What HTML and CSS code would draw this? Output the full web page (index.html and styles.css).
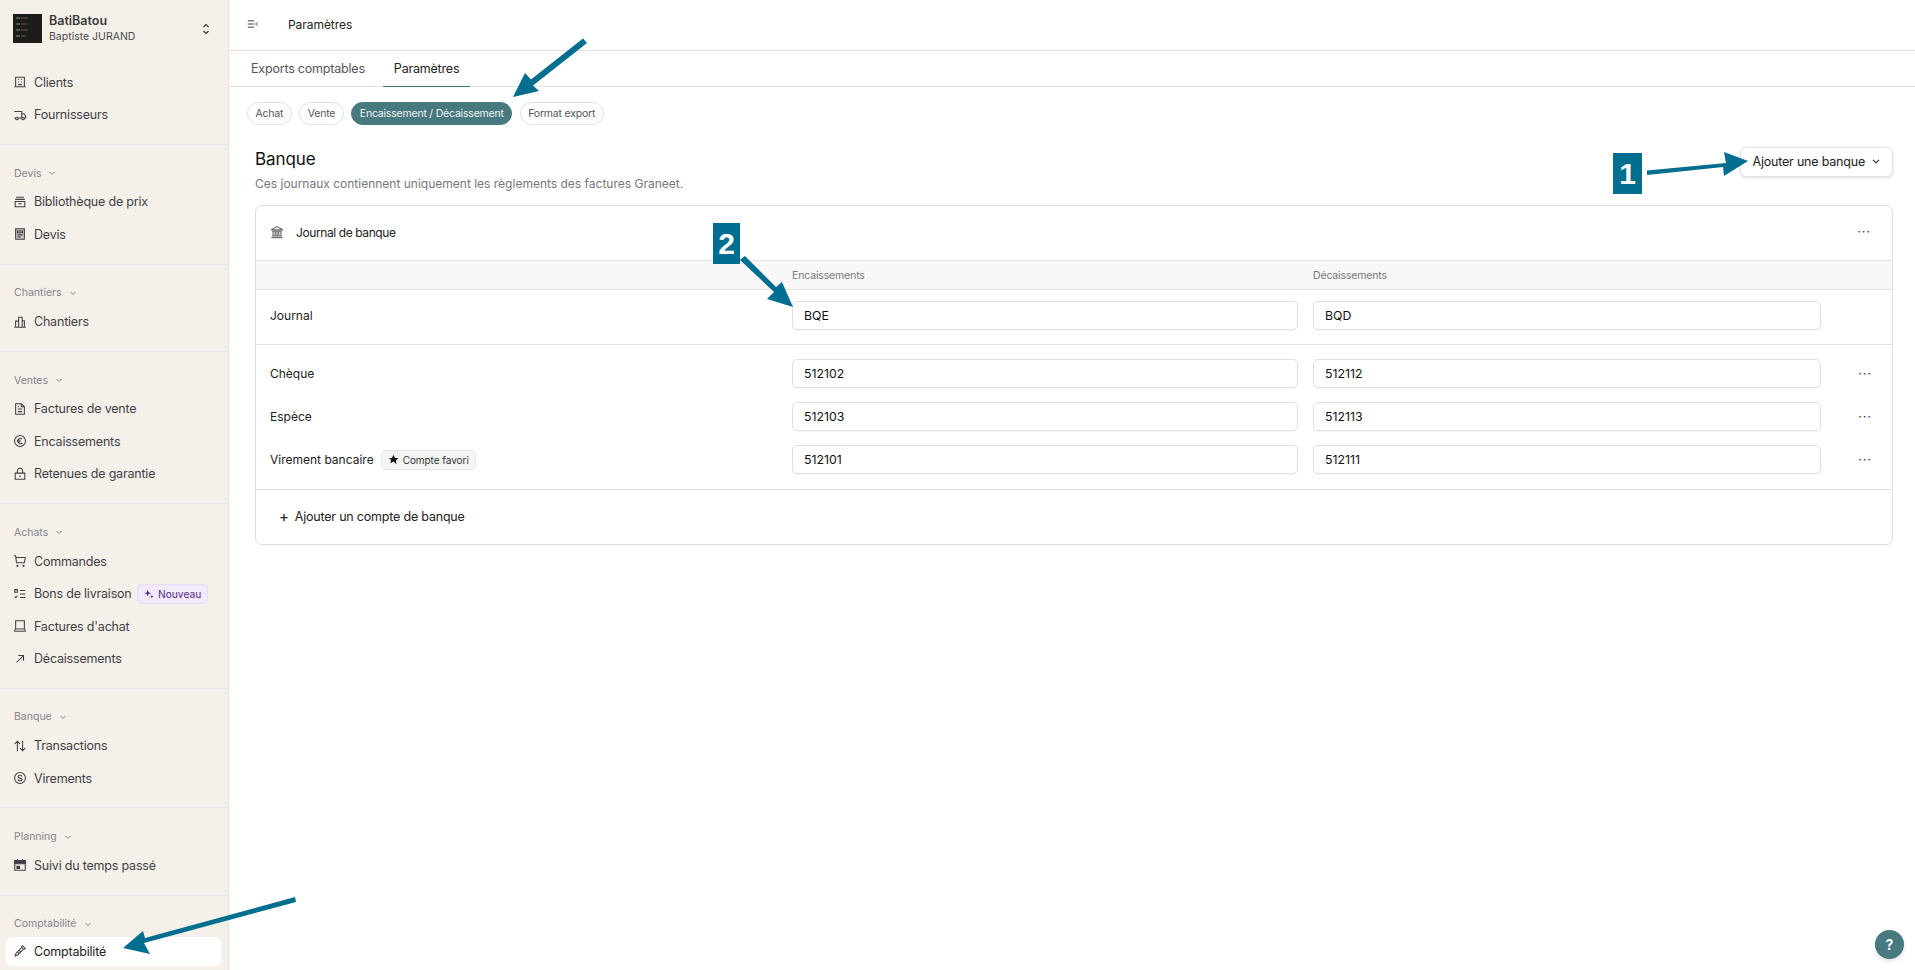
FILE: index.html
```html
<!DOCTYPE html>
<html lang="fr">
<head>
<meta charset="utf-8">
<title>Paramètres</title>
<link rel="stylesheet" href="styles.css">
</head>
<body>
<div class="app">
  <aside class="sidebar">
    <div class="account">
      <svg class="logo" viewBox="0 0 29 29"><rect width="29" height="29" fill="#1c1c1b"/><g fill="#4a5560"><rect x="3" y="3" width="4" height="2"/><rect x="3" y="9" width="4" height="2"/><rect x="3" y="15" width="4" height="2"/><rect x="3" y="21" width="4" height="2"/></g><g fill="#6b5a3a"><rect x="8" y="3.5" width="7" height="1"/><rect x="8" y="9.5" width="6" height="1"/><rect x="8" y="15.5" width="7" height="1"/><rect x="8" y="21.5" width="5" height="1"/></g></svg>
      <div class="account-text"><div class="account-name">BatiBatou</div><div class="account-user">Baptiste JURAND</div></div>
      <svg class="updown" viewBox="0 0 12 16" fill="none" stroke="#333" stroke-width="1.2"><path d="M3.500 6L6 3.500 8.500 6M3.500 10L6 12.500 8.500 10"/></svg>
    </div>
    <div class="section section-first">
      <a class="item"><svg class="ico" viewBox="0 0 16 16"><path d="M3 2.500h10v11H3zM1.500 13.500h13M6 5h1M9 5h1M6 8h1M9 8h1M6 11h4"/></svg>Clients</a>
      <a class="item"><svg class="ico" viewBox="0 0 16 16"><path d="M1.500 4h8.500v7.500H6M3 11.500H1.500zM10 6.500h2.500l2 2.500v2.500H13"/><circle cx="4.500" cy="12" r="1.500"/><circle cx="11.500" cy="12" r="1.500"/></svg>Fournisseurs</a>
    </div>
    <div class="section">
      <div class="label">Devis<svg class="chev" viewBox="0 0 10 10"><path d="M2.500 4L5 6.500 7.500 4"/></svg></div>
      <a class="item"><svg class="ico" viewBox="0 0 16 16"><path d="M3.500 2.500h9M2.500 5h11M2.500 7.500h11v6h-11zM6 10h4"/></svg>Bibliothèque de prix</a>
      <a class="item"><svg class="ico" viewBox="0 0 16 16"><path d="M3 2h10v12H3z" fill="#c9c7c4"/><path d="M5 4.500h6v2H5zM5 9h6M5 11.500h4"/></svg>Devis</a>
    </div>
    <div class="section">
      <div class="label">Chantiers<svg class="chev" viewBox="0 0 10 10"><path d="M2.500 4L5 6.500 7.500 4"/></svg></div>
      <a class="item"><svg class="ico" viewBox="0 0 16 16"><path d="M1.500 14h13M3 14V7h3.500M6.500 14V2.500h4V14M10.500 6.500H13V14"/></svg>Chantiers</a>
    </div>
    <div class="section">
      <div class="label">Ventes<svg class="chev" viewBox="0 0 10 10"><path d="M2.500 4L5 6.500 7.500 4"/></svg></div>
      <a class="item"><svg class="ico" viewBox="0 0 16 16"><path d="M3 2h6.500L13 5.500V14H3zM9.500 2v3.500H13M5.500 8h5M5.500 11h5M5.500 5.500H7"/></svg>Factures de vente</a>
      <a class="item"><svg class="ico" viewBox="0 0 16 16"><circle cx="8" cy="8" r="6.200"/><path d="M10.500 5.700a3 3 0 1 0 0 4.600M4.500 7.200h4M4.500 8.900h4"/></svg>Encaissements</a>
      <a class="item"><svg class="ico" viewBox="0 0 16 16"><path d="M2.500 7h11v7h-11zM5 7V4.500a3 3 0 0 1 6 0V7M7 10.500h2"/></svg>Retenues de garantie</a>
    </div>
    <div class="section">
      <div class="label">Achats<svg class="chev" viewBox="0 0 10 10"><path d="M2.500 4L5 6.500 7.500 4"/></svg></div>
      <a class="item"><svg class="ico" viewBox="0 0 16 16"><path d="M1 2h2l1 8h9l1-6H3.500"/><circle cx="5" cy="13.500" r=".7"/><circle cx="12" cy="13.500" r=".7"/></svg>Commandes</a>
      <a class="item"><svg class="ico" viewBox="0 0 16 16"><path d="M2 3h3v3H2zM8 4h6M8 8h6M8 12h6M2 11l1.200 1.200L5 10"/></svg>Bons de livraison<span class="badge"><svg class="spark" viewBox="0 0 12 12"><path d="M4.500 1l1 3 3 1-3 1-1 3-1-3-3-1 3-1zM9.500 7l.6 1.400 1.400.6-1.400.6-.6 1.400-.6-1.400L7.500 9l1.400-.6z"/></svg>Nouveau</span></a>
      <a class="item"><svg class="ico" viewBox="0 0 16 16"><path d="M3 2h10v9.500H3zM1.500 14h13M1.500 14c0-1.500 1.500-2.500 1.500-2.500M14.500 14c0-1.500-1.500-2.500-1.500-2.500"/></svg>Factures d'achat</a>
      <a class="item"><svg class="ico" viewBox="0 0 16 16"><path d="M4 12l8-8M6 4h6v6"/></svg>Décaissements</a>
    </div>
    <div class="section">
      <div class="label">Banque<svg class="chev" viewBox="0 0 10 10"><path d="M2.500 4L5 6.500 7.500 4"/></svg></div>
      <a class="item"><svg class="ico" viewBox="0 0 16 16"><path d="M5 14V2.500M2 5.500l3-3 3 3M11 2v11.500M8 10.500l3 3 3-3"/></svg>Transactions</a>
      <a class="item"><svg class="ico" viewBox="0 0 16 16"><circle cx="8" cy="8" r="6.200"/><path d="M10.300 6.300c-.3-1-1.200-1.400-2.300-1.400-1.200 0-2.200.6-2.200 1.600 0 2.300 4.600 1 4.600 3.100 0 1-1 1.500-2.400 1.500-1.200 0-2.100-.5-2.400-1.400"/></svg>Virements</a>
    </div>
    <div class="section">
      <div class="label">Planning<svg class="chev" viewBox="0 0 10 10"><path d="M2.500 4L5 6.500 7.500 4"/></svg></div>
      <a class="item"><svg class="ico" viewBox="0 0 16 16"><path d="M2 3h12v11H2z"/><path d="M2 3h12v3.500H2z" fill="#3f3f46"/><path d="M5 1v2M11 1v2"/><path d="M4.500 9.500h3V12h-3z" fill="#3f3f46"/></svg>Suivi du temps passé</a>
    </div>
    <div class="section section-last">
      <div class="label">Comptabilité<svg class="chev" viewBox="0 0 10 10"><path d="M2.500 4L5 6.500 7.500 4"/></svg></div>
      <a class="item item-active"><svg class="ico" viewBox="0 0 16 16"><path d="M2.500 13.500l1-3L10 4l2 2-6.500 6.500z"/><path d="M5 9l2 2M7 7l2 2M9.500 3.500L11 2l3 3-1.500 1.500"/></svg>Comptabilité</a>
    </div>
  </aside>

  <main class="main">
    <header class="topbar">
      <svg class="collapse" viewBox="0 0 14 12"><path d="M1 2h8M1 6h8M1 10h8M13 4l-2 2 2 2"/></svg>
      <span class="page-title">Paramètres</span>
    </header>
    <nav class="tabs">
      <a class="tab">Exports comptables</a>
      <a class="tab tab-active">Paramètres</a>
    </nav>
    <div class="pills">
      <span class="pill">Achat</span>
      <span class="pill">Vente</span>
      <span class="pill pill-active">Encaissement / Décaissement</span>
      <span class="pill">Format export</span>
    </div>
    <div class="content">
      <div class="head">
        <div>
          <h1 class="title">Banque</h1>
          <p class="subtitle">Ces journaux contiennent uniquement les règlements des factures Graneet.</p>
        </div>
        <button class="add-btn">Ajouter une banque<svg class="chev chev-dark" viewBox="0 0 10 10"><path d="M2.500 4L5 6.500 7.500 4"/></svg></button>
      </div>
      <section class="card">
        <div class="card-head">
          <div class="card-title"><svg class="bank" viewBox="0 0 16 16"><path d="M1.500 5.500L8 1.800l6.500 3.700zM2.500 7h11M3.500 7.500V12M6 7.500V12M8 7.500V12M10 7.500V12M12.500 7.500V12M2.500 12.500h11M1.500 14.500h13"/></svg>Journal de banque</div>
          <span class="dots">···</span>
        </div>
        <div class="grid grid-head">
          <span></span><span>Encaissements</span><span>Décaissements</span><span></span>
        </div>
        <div class="grid grid-journal">
          <span class="row-label">Journal</span>
          <div class="field">BQE</div>
          <div class="field">BQD</div>
          <span></span>
        </div>
        <div class="rows">
          <div class="grid">
            <span class="row-label">Chèque</span>
            <div class="field">512102</div>
            <div class="field">512112</div>
            <span class="dots">···</span>
          </div>
          <div class="grid">
            <span class="row-label">Espèce</span>
            <div class="field">512103</div>
            <div class="field">512113</div>
            <span class="dots">···</span>
          </div>
          <div class="grid">
            <span class="row-label">Virement bancaire<span class="fav"><svg class="star" viewBox="0 0 12 12"><path d="M6 .8l1.600 3.500 3.800.4-2.800 2.600.8 3.800L6 8.200l-3.400 1.900.8-3.800L.6 4.700l3.800-.4z"/></svg>Compte favori</span></span>
            <div class="field">512101</div>
            <div class="field">512111</div>
            <span class="dots">···</span>
          </div>
        </div>
        <div class="card-foot"><span class="plus">+</span>Ajouter un compte de banque</div>
      </section>
    </div>
  </main>
</div>

<div class="help">?</div>
<div class="tag tag-one">1</div>
<div class="tag tag-two">2</div>
<svg class="arrows" viewBox="0 0 1915 970">
  <g fill="#006f8f" stroke="none">
    <path d="M583 38.500l4 4.500-54 42.500 6 5.500-26 6 12-24 6 6.500z"/>
    <path d="M1647 170.500l79-7.500-2-11 24 9-24 15-1-9-76 8z"/>
    <path d="M745 256l-5 4 34 32-7 7 26 8-11-25-6 5z"/>
    <path d="M295 897l1 5-152 41 6 11-27-6 20-17 2 7z"/>
  </g>
</svg>
</body>
</html>
```

FILE: styles.css
```css
* { box-sizing: border-box; }
html, body { margin: 0; height: 100%; }
body {
  position: relative;
  overflow: hidden;
  font-family: "Inter", "Liberation Sans", sans-serif;
  color: #111;
  background: #fff;
}
.app { display: flex; height: 970px; }

/* Sidebar */
.sidebar {
  width: 229px;
  flex: none;
  background: #f6f0ea;
  border-right: 1px solid #e3e3e3;
  display: flex;
  flex-direction: column;
}
.account {
  display: flex;
  align-items: center;
  height: 57px;
  padding: 0 0 0 13px;
}
.logo { width: 29px; height: 29px; flex: none; margin-right: 7px; }
.account-text { flex: 1; }
.account-name { font-size: 12.5px; font-weight: 600; color: #3a3a3d; line-height: 16px; }
.account-user { font-size: 10.5px; color: #4a4a4f; line-height: 15px; }
.updown { width: 12px; height: 16px; margin-right: 16px; }
.section {
  padding: 18.2px 0 13px;
  border-bottom: 1px solid #e4e5e6;
}
.section-first { padding: 9px 0 13px; }
.section-last { border-bottom: 0; padding-bottom: 0; }
.label {
  display: flex;
  align-items: center;
  gap: 6px;
  height: 20px;
  margin: 0 0 2.5px 14px;
  font-size: 10.5px;
  color: #85858a;
}
.chev { width: 10px; height: 10px; fill: none; stroke: #85858a; stroke-width: 1; }
.chev-dark { stroke: #333; width: 12px; height: 12px; }
.item {
  display: flex;
  align-items: center;
  height: 32.5px;
  margin: 0 6px;
  padding-left: 7px;
  border-radius: 6px;
  font-size: 12.5px;
  letter-spacing: -.2px;
  color: #3f3f46;
}
.item-active { background: #fff; color: #222; height: 29px; margin: 3px 7px 0 6px; }
.ico {
  width: 14px;
  height: 14px;
  margin-right: 7px;
  flex: none;
  fill: none;
  stroke: #3f3f46;
  stroke-width: 1.2;
}
.badge {
  display: inline-flex;
  align-items: center;
  gap: 4px;
  height: 20px;
  margin-left: 5.5px;
  padding: 0 6px;
  border: 1px solid #e8dcf8;
  border-radius: 5px;
  background: #f2eafb;
  color: #55298c;
  font-size: 10.2px;
  letter-spacing: 0;
}
.spark { width: 10px; height: 10px; fill: #55298c; }

/* Main */
.main { flex: 1; min-width: 0; display: flex; flex-direction: column; }
.topbar {
  display: flex;
  align-items: center;
  height: 51px;
  padding: 0 0 2px 18px;
  border-bottom: 1px solid #e3e3e3;
}
.collapse {
  width: 11px;
  height: 10px;
  margin-right: 30px;
  fill: none;
  stroke: #333;
  stroke-width: 1.2;
}
.page-title { font-size: 12px; letter-spacing: -.05px; color: #222; }
.tabs {
  display: flex;
  height: 36px;
  padding-left: 11px;
  border-bottom: 1px solid #e3e3e3;
}
.tab {
  display: flex;
  align-items: center;
  padding: 0 11px;
  font-size: 12.5px;
  letter-spacing: -.2px;
  color: #55555a;
}
.tab-active {
  color: #222;
  margin-bottom: -1px;
  border-bottom: 1px solid #47797f;
  margin-left: 7px;
}
.pills { display: flex; gap: 7.5px; padding: 15px 0 0 18px; }
.pill {
  display: flex;
  align-items: center;
  height: 23px;
  padding: 0 7.5px;
  border: 1px solid #e2e2e2;
  border-radius: 12px;
  font-size: 10.5px;
  letter-spacing: -.2px;
  color: #55555a;
}
.pill-active { background: #47797f; border-color: #47797f; color: #eef4f4; }
.content { padding: 0 22px 0 26px; }
.head { display: flex; justify-content: space-between; align-items: flex-start; padding-top: 22px; height: 80px; }
.title { margin: 0; font-size: 17px; letter-spacing: -.1px; font-weight: 400; line-height: 24px; color: #111; }
.subtitle { margin: 5px 0 0; font-size: 12px; line-height: 16px; color: #77777c; }
.add-btn {
  display: flex;
  align-items: center;
  gap: 5px;
  height: 30px;
  padding: 0 10px 2px 11px;
  background: #fff;
  border: 1px solid #e4e4e4;
  border-radius: 6px;
  box-shadow: 0 1px 3px rgba(0,0,0,.12);
  font: inherit;
  font-size: 12.5px;
  letter-spacing: -.2px;
  color: #222;
}
.card {
  height: 340px;
  border: 1px solid #e0e0e0;
  border-radius: 7px;
  box-shadow: 0 1px 1px rgba(0,0,0,.03);
}
.card-head {
  display: flex;
  align-items: center;
  justify-content: space-between;
  height: 55px;
  padding: 0 14px 2px;
  border-bottom: 1px solid #e3e3e3;
}
.card-title { display: flex; align-items: center; gap: 12px; font-size: 12px; letter-spacing: -.4px; color: #222; }
.bank { width: 14px; height: 14px; fill: none; stroke: #222; stroke-width: .9; }
.dots { width: 28px; padding-bottom: 2px; text-align: center; font-size: 13px; letter-spacing: .8px; color: #444; justify-self: end; }
.grid {
  display: grid;
  grid-template-columns: 507px 506px 508px 43px;
  column-gap: 15px;
  align-items: center;
  height: 43px;
  padding: 0 14px;
}
.grid-head {
  height: 29px;
  background: #f8f8f8;
  border-bottom: 1px solid #e3e3e3;
  font-size: 10.5px;
  letter-spacing: -.15px;
  color: #77777c;
}
.grid-journal { height: 55px; padding-bottom: 4px; border-bottom: 1px solid #e3e3e3; }
.rows { height: 145px; padding-top: 7px; border-bottom: 1px solid #e3e3e3; }
.row-label { display: flex; align-items: center; font-size: 12px; color: #222; }
.field {
  display: flex;
  align-items: center;
  height: 29px;
  padding-left: 11px;
  background: #fff;
  border: 1px solid #e0e0e0;
  border-radius: 5px;
  box-shadow: 0 1px 1px rgba(0,0,0,.03);
  font-size: 12.3px;
  color: #111;
}
.fav {
  display: inline-flex;
  align-items: center;
  gap: 4px;
  height: 20px;
  margin-left: 7px;
  padding: 0 6px;
  background: #f5f5f5;
  border: 1px solid #e6e6e6;
  border-radius: 5px;
  font-size: 10px;
  letter-spacing: -.05px;
  color: #333;
}
.star { width: 11px; height: 11px; fill: #111; }
.card-foot {
  display: flex;
  align-items: center;
  height: 54px;
  padding: 0 0 2px 23px;
  font-size: 12.5px;
  letter-spacing: -.2px;
  color: #222;
}
.plus { margin-right: 6px; font-size: 15px; }

/* Overlays */
.help {
  position: absolute;
  left: 1875px;
  top: 930px;
  width: 29px;
  height: 29px;
  border-radius: 50%;
  background: #47797f;
  box-shadow: 0 2px 5px rgba(0,0,0,.12);
  color: #fff;
  font-size: 14px;
  font-weight: 700;
  line-height: 29px;
  text-align: center;
}
.tag {
  position: absolute;
  background: #006f8f;
  color: #fff;
  font-family: "Liberation Sans", sans-serif;
  font-weight: 700;
  font-size: 30px;
  text-align: center;
  height: 41px;
  line-height: 41px;
}
.tag-one { left: 1613px; top: 153px; width: 29px; }
.tag-two { left: 713px; top: 223px; width: 27px; }
.arrows { position: absolute; left: 0; top: 0; width: 1915px; height: 970px; pointer-events: none; }
```
